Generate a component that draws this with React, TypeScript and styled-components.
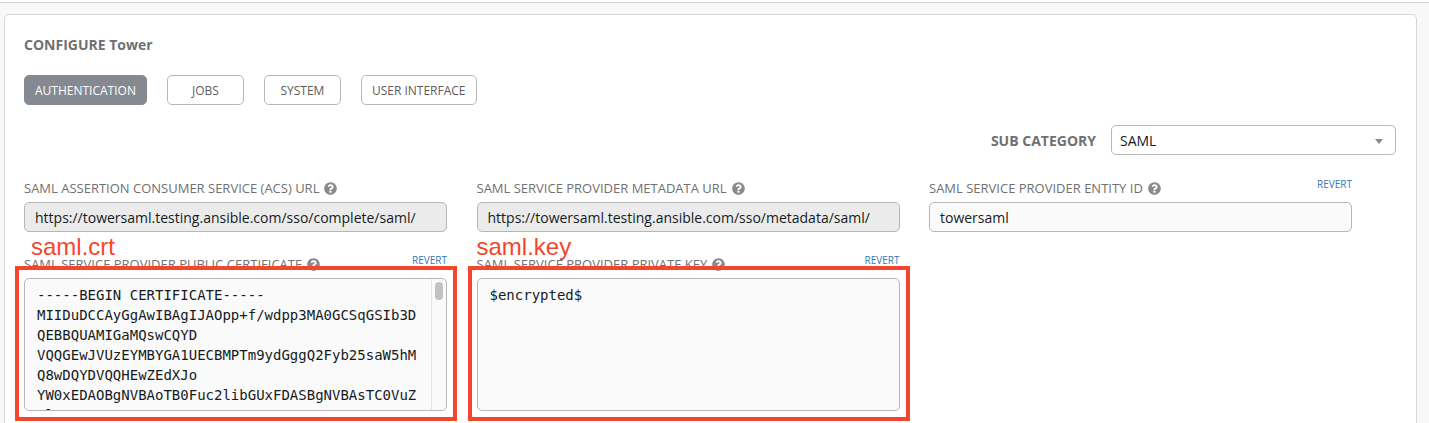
import React from "react";
import styled, { createGlobalStyle } from "styled-components";
import { FaQuestionCircle } from "react-icons/fa";

const GlobalStyle = createGlobalStyle`
  html, body { margin: 0; padding: 0; background: #f8f8f8; }
  body {
    font-family: "Open Sans", "Liberation Sans", sans-serif;
    width: 1429px;
    height: 423px;
    overflow: hidden;
  }
  * { box-sizing: border-box; }
`;

const TopRule = styled.div`
  height: 3px;
  background: #ffffff;
  border-bottom: 1px solid #d2d2d2;
`;

const Page = styled.div`
  padding: 11px 12px 0 4px;
`;

const Card = styled.section`
  background: #ffffff;
  border: 1px solid #d7d7d7;
  border-radius: 5px;
  padding: 20px 20px 40px 19px;
  min-height: 520px;
`;

const Title = styled.h1`
  margin: 0;
  font-size: 14px;
  line-height: 20px;
  font-weight: 700;
  color: #707070;
`;

const Tabs = styled.nav`
  display: flex;
  gap: 20px;
  margin-top: 20px;
`;

const Tab = styled.button<{ $active?: boolean }>`
  height: 30px;
  min-width: 77px;
  padding: 0 10px;
  border-radius: 5px;
  border: 1px solid ${(p) => (p.$active ? "#848992" : "#b7b7b7")};
  background: ${(p) => (p.$active ? "#848992" : "#ffffff")};
  color: ${(p) => (p.$active ? "#ffffff" : "#5c5c5c")};
  font-family: inherit;
  font-size: 12px;
  text-transform: uppercase;
  cursor: pointer;
`;

const SubCategoryRow = styled.div`
  display: flex;
  justify-content: flex-end;
  align-items: center;
  gap: 15px;
  margin-top: 20px;
`;

const SubCategoryLabel = styled.span`
  font-size: 14px;
  font-weight: 700;
  color: #707070;
  text-transform: uppercase;
`;

const Select = styled.div`
  position: relative;
  width: 285px;
  height: 30px;
  border: 1px solid #b7b7b7;
  border-radius: 5px;
  background: #ffffff;
  display: flex;
  align-items: center;
  padding: 0 8px;
  font-size: 14px;
  color: #161b1f;
`;

const Caret = styled.span`
  position: absolute;
  right: 12px;
  top: 13px;
  width: 0;
  height: 0;
  border-left: 4px solid transparent;
  border-right: 4px solid transparent;
  border-top: 5px solid #888888;
`;

const Grid = styled.div`
  display: grid;
  grid-template-columns: repeat(3, 423px);
  column-gap: 29.5px;
  row-gap: 22px;
  margin-top: 23px;
`;

const Field = styled.div`
  position: relative;
  display: flex;
  flex-direction: column;
`;

const LabelRow = styled.div`
  display: flex;
  justify-content: space-between;
  align-items: flex-start;
  height: 16px;
  margin-bottom: 8px;
`;

const Label = styled.label`
  display: flex;
  align-items: center;
  gap: 5px;
  padding-top: 2px;
  font-size: 13px;
  line-height: 16px;
  color: #707070;
  text-transform: uppercase;
  white-space: nowrap;
`;

const HelpIcon = styled(FaQuestionCircle)`
  color: #8a8a8a;
  width: 13px;
  height: 13px;
`;

const Revert = styled.a`
  font-size: 10px;
  line-height: 12px;
  color: #3677b5;
  text-transform: uppercase;
  cursor: pointer;
`;

const Input = styled.div<{ $readOnly?: boolean }>`
  height: 30px;
  border: 1px solid #b7b7b7;
  border-radius: 5px;
  background: ${(p) => (p.$readOnly ? "#ebebeb" : "#fafafa")};
  padding: 0 10px;
  display: flex;
  align-items: center;
  font-size: 14px;
  color: #161b1f;
  white-space: nowrap;
`;

const AreaWrap = styled.div`
  position: relative;
`;

const TextArea = styled.textarea`
  display: block;
  width: 100%;
  height: 133px;
  margin: 0;
  border: 1px solid #b7b7b7;
  border-radius: 5px;
  background: #fafafa;
  padding: 6px 16px 5px 12px;
  font-family: "DejaVu Sans Mono", "Liberation Mono", monospace;
  font-size: 14px;
  line-height: 20px;
  color: #161b1f;
  resize: none;
  white-space: pre;
  overflow: hidden;
  outline: none;
`;

const ScrollTrack = styled.div`
  position: absolute;
  top: 1px;
  bottom: 1px;
  right: 1px;
  width: 15px;
  border-left: 1px solid #e6e6e6;
  pointer-events: none;
`;

const ScrollThumb = styled.div`
  position: absolute;
  top: 3px;
  right: 3px;
  width: 8px;
  height: 18px;
  border-radius: 4px;
  background: #c2c2c2;
`;

const Highlight = styled.div`
  position: absolute;
  top: -12px;
  left: -9px;
  right: -10px;
  bottom: -10px;
  border: 4px solid #f4462c;
  pointer-events: none;
`;

const Annotation = styled.span<{ $left: number }>`
  position: absolute;
  top: -19px;
  left: ${(p) => p.$left}px;
  font-family: "Liberation Sans", Arial, sans-serif;
  font-size: 24px;
  line-height: 24px;
  color: #f4462c;
  pointer-events: none;
`;

const certificate = [
  "-----BEGIN CERTIFICATE-----",
  "MIIDuDCCAyGgAwIBAgIJAOpp+f/wdpp3MA0GCSqGSIb3D",
  "QEBBQUAMIGaMQswCQYD",
  "VQQGEwJVUzEYMBYGA1UECBMPTm9ydGggQ2Fyb25saW5hM",
  "Q8wDQYDVQQHEwZEdXJo",
  "YW0xEDAOBgNVBAoTB0Fuc2libGUxFDASBgNVBAsTC0VuZ",
  "2luZWVyaW5nMRwwGgYD",
  "VQQDExN0b3dlcnNhbWwudGVzdGluZzEiMCAGCSqGSIb3D",
  "QEJARYTYWRtaW5AYW5z",
  "aWJsZS5jb20wHhcNMTcwMzIwMTYxNjQyWhcNMjcwMzIwM",
  "TYxNjQyWjCBmjELMAkG",
  "A1UEBhMCVVMxGDAWBgNVBAgTD05vcnRoIENhcm9saW5hM",
  "-----END CERTIFICATE-----",
].join("\n");

export default function App() {
  return (
    <>
      <GlobalStyle />
      <TopRule />
      <Page>
        <Card>
          <Title>CONFIGURE Tower</Title>
          <Tabs>
            <Tab $active>Authentication</Tab>
            <Tab>Jobs</Tab>
            <Tab>System</Tab>
            <Tab>User Interface</Tab>
          </Tabs>
          <SubCategoryRow>
            <SubCategoryLabel>Sub Category</SubCategoryLabel>
            <Select>
              SAML
              <Caret />
            </Select>
          </SubCategoryRow>
          <Grid>
            <Field>
              <LabelRow>
                <Label>
                  SAML Assertion Consumer Service (ACS) URL <HelpIcon />
                </Label>
              </LabelRow>
              <Input $readOnly>https://towersaml.testing.ansible.com/sso/complete/saml/</Input>
            </Field>
            <Field>
              <LabelRow>
                <Label>
                  SAML Service Provider Metadata URL <HelpIcon />
                </Label>
              </LabelRow>
              <Input $readOnly>https://towersaml.testing.ansible.com/sso/metadata/saml/</Input>
            </Field>
            <Field>
              <LabelRow>
                <Label>
                  SAML Service Provider Entity ID <HelpIcon />
                </Label>
                <Revert>Revert</Revert>
              </LabelRow>
              <Input>towersaml</Input>
            </Field>
            <Field>
              <Annotation $left={7}>saml.crt</Annotation>
              <LabelRow>
                <Label>
                  SAML Service Provider Public Certificate <HelpIcon />
                </Label>
                <Revert>Revert</Revert>
              </LabelRow>
              <AreaWrap>
                <TextArea readOnly value={certificate} />
                <ScrollTrack>
                  <ScrollThumb />
                </ScrollTrack>
                <Highlight />
              </AreaWrap>
            </Field>
            <Field>
              <Annotation $left={0}>saml.key</Annotation>
              <LabelRow>
                <Label>
                  SAML Service Provider Private Key <HelpIcon />
                </Label>
                <Revert>Revert</Revert>
              </LabelRow>
              <AreaWrap>
                <TextArea readOnly value="$encrypted$" />
                <Highlight />
              </AreaWrap>
            </Field>
          </Grid>
        </Card>
      </Page>
    </>
  );
}
